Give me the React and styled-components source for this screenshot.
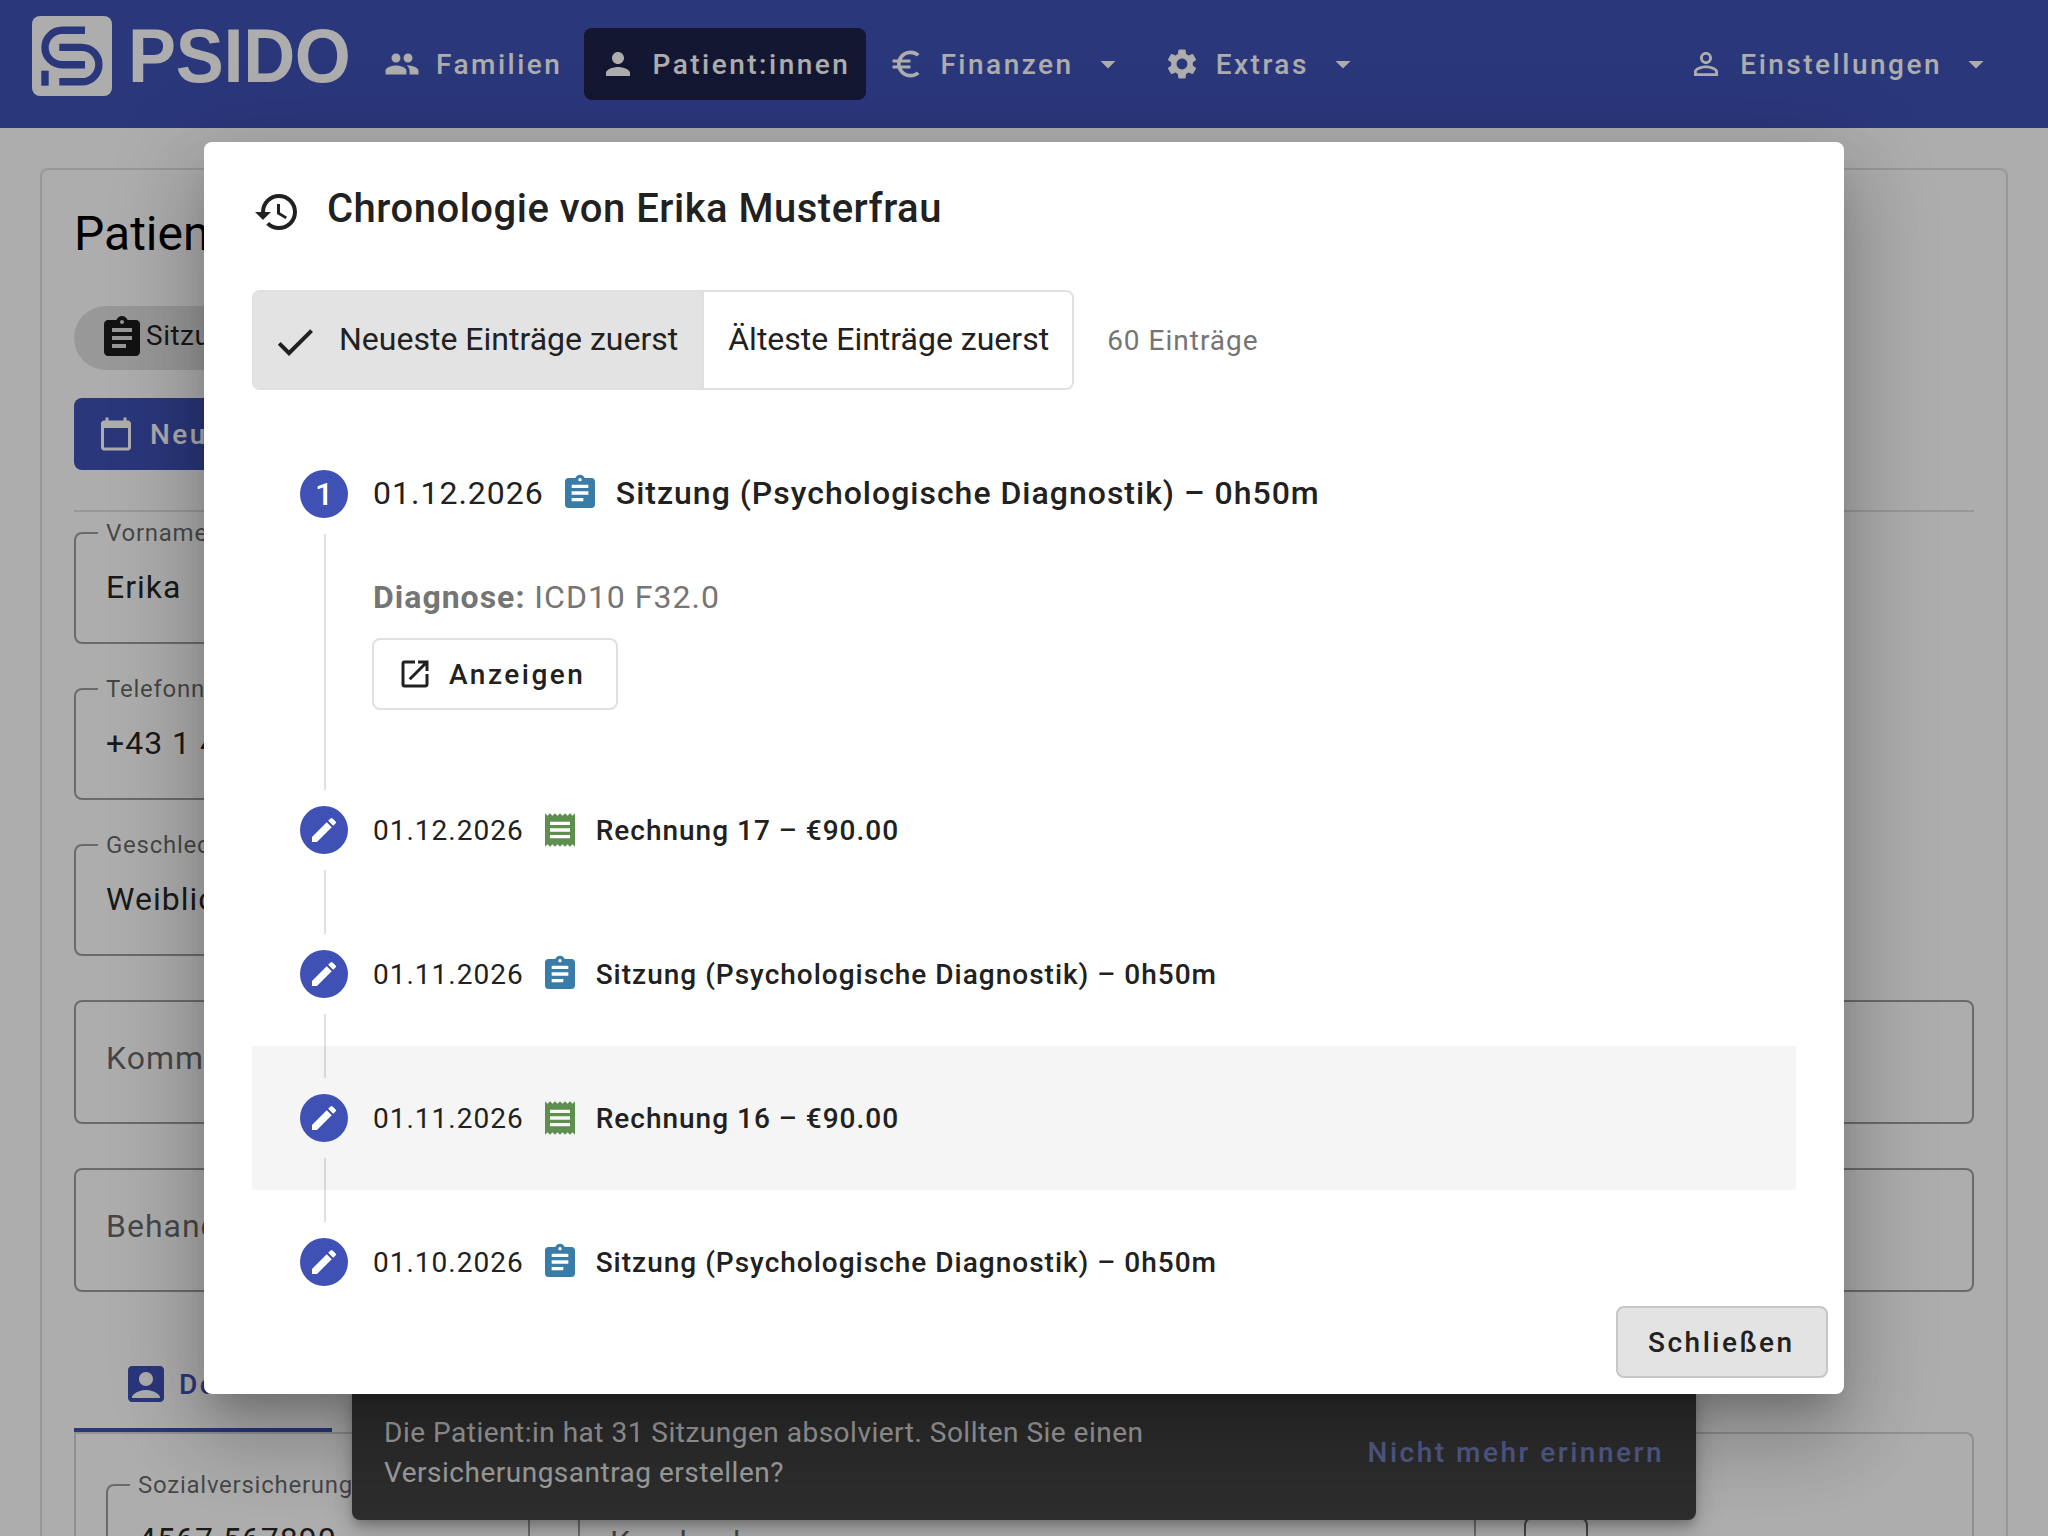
import React from 'react';
import styled, { createGlobalStyle } from 'styled-components';
import {
  MdPeople,
  MdPerson,
  MdEuroSymbol,
  MdSettings,
  MdPersonOutline,
  MdArrowDropDown,
  MdHistory,
  MdCheck,
  MdAssignment,
  MdReceipt,
  MdCreate,
  MdOpenInNew,
  MdCalendarToday,
  MdAccountBox,
} from 'react-icons/md';

const GlobalStyle = createGlobalStyle`
  * {
    box-sizing: border-box;
  }
  body {
    margin: 0;
    overflow: hidden;
    background: #fff;
    font-family: Roboto, sans-serif;
    color: rgba(0, 0, 0, 0.87);
  }
  svg {
    display: block;
    flex: none;
  }
`;

const Screen = styled.div`
  position: relative;
  width: 2048px;
  height: 1536px;
  overflow: hidden;
`;

/* header */

const Header = styled.header`
  display: flex;
  height: 128px;
  padding: 0 38px 0 32px;
  background: #3f51b5;
  color: #fff;
`;

const Brand = styled.div`
  display: flex;
  align-items: center;
  width: 336px;
  height: 112px;
`;

const BrandName = styled.span`
  margin-left: 16px;
  font: bold 72px/80px 'Liberation Sans', Arial, sans-serif;
  letter-spacing: -0.3px;
  transform: scaleY(1.045);
`;

const Nav = styled.nav`
  display: flex;
  flex: 1;
  align-items: center;
  gap: 6px;
`;

// labels sit one pixel below the icon's centre line
const BaseButton = styled.button`
  display: flex;
  align-items: center;
  gap: 16px;
  height: 72px;
  padding: 2px 16px 0;
  border: 0;
  border-radius: 8px;
  font: 500 28px/40px Roboto, sans-serif;
  letter-spacing: 2.5px;
  white-space: nowrap;

  svg {
    margin-top: -2px;
  }
`;

const NavButton = styled(BaseButton)`
  background: ${props => (props.$active ? '#1c224a' : 'transparent')};
  color: #fff;
  margin-left: ${props => props.$push || '0'};
`;

/* patient page */

const Page = styled.main`
  padding: 40px;
`;

const Card = styled.section`
  height: 1500px;
  padding: 32px;
  border: 2px solid #e0e0e0;
  border-radius: 8px;
`;

const PageTitle = styled.h1`
  margin: 0 0 40px;
  color: #000;
  font-size: 48px;
  font-weight: 400;
  line-height: 64px;
`;

const Chip = styled.div`
  display: flex;
  align-items: center;
  width: 240px;
  height: 64px;
  margin-bottom: 28px;
  padding: 0 24px 4px;
  border-radius: 32px;
  background: #e0e0e0;
  font-size: 28px;
  line-height: 40px;
  letter-spacing: 0.5px;

  svg {
    margin-top: 4px;
  }
`;

const PrimaryButton = styled(BaseButton)`
  width: 300px;
  padding: 2px 24px 0;
  background: #3f51b5;
  color: #fff;
`;

const Divider = styled.hr`
  height: 2px;
  margin: 40px 0 20px;
  border: 0;
  background: #e0e0e0;
`;

const Field = styled.div`
  position: relative;
  width: ${props => props.$width || '100%'};
  height: ${props => (props.$tall ? 124 : 112)}px;
  margin-bottom: 44px;
  padding: ${props => (props.$tall ? 32 : 29)}px 30px 0;
  border: 2px solid rgba(0, 0, 0, 0.38);
  border-radius: 8px;
  color: ${props => (props.$tall ? 'rgba(0, 0, 0, 0.6)' : 'inherit')};
  font-size: 32px;
  line-height: 48px;
  letter-spacing: 1px;
  white-space: nowrap;
`;

const FieldLabel = styled.label`
  position: absolute;
  top: -15px;
  left: 22px;
  padding: 0 8px;
  background: #fff;
  color: rgba(0, 0, 0, 0.6);
  font-size: 24px;
  line-height: 28px;
  letter-spacing: 0.75px;
`;

const Tabs = styled.div`
  display: flex;
`;

const Tab = styled(BaseButton)`
  gap: 9px;
  width: 258px;
  height: 96px;
  padding: 6px 46px 0 48px;
  border-bottom: 4px solid #3f51b5;
  border-radius: 0;
  background: none;
  color: #3f51b5;
`;

const TabPanel = styled.div`
  display: flex;
  gap: 48px;
  height: 400px;
  padding: 50px 30px;
  border: 2px solid #d6d6d6;
  border-radius: 0 8px 8px 8px;
`;

const SquareButton = styled.div`
  width: 64px;
  height: 64px;
  margin-top: 33px;
  border: 2px solid rgba(0, 0, 0, 0.6);
  border-radius: 8px;
`;

/* snackbar floats over the page, the backdrop covers both */

const Snackbar = styled.div`
  position: absolute;
  left: 352px;
  bottom: 16px;
  display: flex;
  align-items: center;
  justify-content: space-between;
  width: 1344px;
  height: 136px;
  padding: 2px 32px 0;
  border-radius: 8px;
  background: #434343;
  box-shadow: 0 6px 10px -2px rgba(0, 0, 0, 0.2),
    0 12px 20px rgba(0, 0, 0, 0.14), 0 2px 36px rgba(0, 0, 0, 0.12);
  color: rgba(255, 255, 255, 0.9);
  font-size: 28px;
  line-height: 40px;
  letter-spacing: 0.5px;
`;

const SnackText = styled.div`
  width: 800px;
`;

const SnackAction = styled.span`
  color: #7986cb;
  font-weight: 500;
  letter-spacing: 2.5px;
`;

const Backdrop = styled.div`
  position: absolute;
  inset: 0;
  display: flex;
  align-items: center;
  justify-content: center;
  background: rgba(0, 0, 0, 0.32);
`;

/* dialog */

const Dialog = styled.div`
  display: flex;
  flex-direction: column;
  width: 1640px;
  height: 1252px;
  border-radius: 8px;
  background: #fff;
  color: #212121;
  box-shadow: 0 22px 30px -14px rgba(0, 0, 0, 0.2),
    0 48px 76px 6px rgba(0, 0, 0, 0.14), 0 18px 92px 16px rgba(0, 0, 0, 0.12);
`;

const DialogTitle = styled.h2`
  display: flex;
  gap: 26px;
  height: 64px;
  margin: 35px 49px -1px;
  font-size: 40px;
  font-weight: 500;
  line-height: 64px;
  letter-spacing: 0.5px;

  svg {
    margin-top: 11px;
  }
`;

const DialogBody = styled.div`
  flex: 1;
  min-height: 0;
  overflow: hidden;
  padding: 50px 48px 0;
`;

const SortRow = styled.div`
  display: flex;
  align-items: center;
  margin-bottom: 32px;
`;

const ToggleGroup = styled.div`
  display: flex;
  height: 100px;
  border: 2px solid #e0e0e0;
  border-radius: 8px;
  overflow: hidden;
`;

const Toggle = styled.button`
  display: flex;
  align-items: center;
  gap: 20px;
  padding: ${props => (props.$checked ? '0 24px 3px 17px' : '0 23px 3px 24px')};
  border: 0;
  border-left: ${props => (props.$checked ? 0 : '2px solid #e0e0e0')};
  background: ${props => (props.$checked ? '#e3e3e3' : '#fff')};
  color: #212121;
  font: 400 32px/48px Roboto, sans-serif;

  svg {
    margin-top: 6px;
  }
`;

const Count = styled.span`
  margin: 2px 0 0 33px;
  color: #757575;
  font-size: 28px;
  line-height: 40px;
  letter-spacing: 1px;
`;

const StepHeader = styled.div`
  display: flex;
  align-items: center;
  height: 144px;
  padding-left: 48px;
  background: ${props => (props.$hovered ? '#f5f5f5' : 'transparent')};
  font-size: ${props => (props.$selected ? 32 : 28)}px;
  line-height: 48px;
  letter-spacing: 1px;
`;

const Rail = styled.div`
  display: flex;
  flex-direction: column;
  align-self: stretch;
  width: 48px;
  margin-right: 24px;
  gap: 16px;
`;

const RailLine = styled.div`
  flex: 1;
  width: 2px;
  margin-left: 24px;
  background: ${props => (props.$hidden ? 'transparent' : 'rgba(0, 0, 0, 0.12)')};
`;

const StepDot = styled.div`
  display: flex;
  align-items: center;
  justify-content: center;
  height: 48px;
  border-radius: 50%;
  background: #3f51b5;
  color: #fff;
  font-size: 32px;
  font-weight: 500;
  letter-spacing: 0;
`;

const StepLabel = styled.div`
  display: flex;
  align-items: center;
  gap: 16px;
  white-space: nowrap;
  margin: ${props => (props.$selected ? '-2px' : '2px')} 0 0 1px;

  svg {
    margin-top: ${props => (props.$selected ? 0 : '-2px')};
  }

  b {
    font-weight: 500;
  }
`;

const StepContent = styled.div`
  display: flex;
  height: 192px;
  padding-left: 48px;
`;

const StepDetails = styled.div`
  padding-top: 7px;
`;

const Diagnosis = styled.p`
  margin: 0 0 17px 1px;
  color: #757575;
  font-size: 32px;
  line-height: 48px;
  letter-spacing: 1px;

  strong {
    font-weight: 700;
  }
`;

const OutlinedButton = styled(BaseButton)`
  padding: ${props => (props.$focused ? '2px 30px 0' : '2px 31px 0 23px')};
  border: 2px solid ${props => (props.$focused ? '#c6c6c6' : '#e0e0e0')};
  background: ${props => (props.$focused ? '#e3e3e3' : '#fff')};
  color: #212121;
`;

const DialogActions = styled.div`
  display: flex;
  justify-content: flex-end;
  padding: 16px;

  button {
    width: 212px;
  }
`;

const Logo = () => (
  <svg width="80" height="80" viewBox="0 0 80 80" fill="none">
    <rect width="80" height="80" rx="8" fill="#fff" />
    <g stroke="#3f51b5" strokeWidth="7.4">
      <path d="M53 14.3H30.2a17.2 17.2 0 0 0 0 34.4H53" />
      <path d="M27.3 31.4h22.4a17.2 17.2 0 0 1 0 34.4H27.3" />
      <path d="M13 54.7v15" />
    </g>
  </svg>
);

const entries = [
  { date: '01.12.2026', type: 'session', title: 'Sitzung (Psychologische Diagnostik) – 0h50m', diagnosis: 'ICD10 F32.0' },
  { date: '01.12.2026', type: 'invoice', title: 'Rechnung 17 – €90.00' },
  { date: '01.11.2026', type: 'session', title: 'Sitzung (Psychologische Diagnostik) – 0h50m' },
  { date: '01.11.2026', type: 'invoice', title: 'Rechnung 16 – €90.00', hovered: true },
  { date: '01.10.2026', type: 'session', title: 'Sitzung (Psychologische Diagnostik) – 0h50m' },
];

const Entry = ({ entry, index }) => {
  const selected = index === 0;
  return (
    <>
      <StepHeader $selected={selected} $hovered={entry.hovered}>
        <Rail>
          <RailLine $hidden={selected} />
          <StepDot>{selected ? index + 1 : <MdCreate size={32} />}</StepDot>
          <RailLine />
        </Rail>
        <StepLabel $selected={selected}>
          <span>{entry.date}</span>
          {entry.type === 'session'
            ? <MdAssignment size={40} color="#3a7ca8" />
            : <MdReceipt size={40} color="#5f8f4e" />}
          <b>{entry.title}</b>
        </StepLabel>
      </StepHeader>
      {entry.diagnosis && (
        <StepContent>
          <Rail>
            <RailLine />
          </Rail>
          <StepDetails>
            <Diagnosis><strong>Diagnose:</strong> {entry.diagnosis}</Diagnosis>
            <OutlinedButton>
              <MdOpenInNew size={36} />
              Anzeigen
            </OutlinedButton>
          </StepDetails>
        </StepContent>
      )}
    </>
  );
};

const PatientPage = () => (
  <Page>
    <Card>
      <PageTitle>Patient:in</PageTitle>
      <Chip><MdAssignment size={48} />Sitzungen</Chip>
      <PrimaryButton><MdCalendarToday size={36} />Neuer</PrimaryButton>
      <Divider />
      <Field $width="540px"><FieldLabel>Vorname</FieldLabel>Erika</Field>
      <Field $width="540px"><FieldLabel>Telefonnummer</FieldLabel>+43 1 4</Field>
      <Field $width="540px"><FieldLabel>Geschlecht</FieldLabel>Weiblich</Field>
      <Field $tall>Kommentar</Field>
      <Field $tall>Behandlung</Field>
      <Tabs>
        <Tab><MdAccountBox size={48} />Details</Tab>
      </Tabs>
      <TabPanel>
        <Field $width="424px"><FieldLabel>Sozialversicherung</FieldLabel>4567 567890</Field>
        <Field $width="898px" $tall>Krankenkasse</Field>
        <SquareButton />
      </TabPanel>
    </Card>
  </Page>
);

function App() {
  return (
    <Screen>
      <GlobalStyle />
      <Header>
        <Brand>
          <Logo />
          <BrandName>PSIDO</BrandName>
        </Brand>
        <Nav>
          <NavButton><MdPeople size={36} />Familien</NavButton>
          <NavButton $active><MdPerson size={36} />Patient:innen</NavButton>
          <NavButton><MdEuroSymbol size={36} />Finanzen<MdArrowDropDown size={36} /></NavButton>
          <NavButton><MdSettings size={36} />Extras<MdArrowDropDown size={36} /></NavButton>
          <NavButton $push="auto"><MdPersonOutline size={36} />Einstellungen<MdArrowDropDown size={36} /></NavButton>
        </Nav>
      </Header>
      <PatientPage />
      <Snackbar>
        <SnackText>
          Die Patient:in hat 31 Sitzungen absolviert. Sollten Sie einen Versicherungsantrag erstellen?
        </SnackText>
        <SnackAction>Nicht mehr erinnern</SnackAction>
      </Snackbar>
      <Backdrop>
        <Dialog>
          <DialogTitle><MdHistory size={48} />Chronologie von Erika Musterfrau</DialogTitle>
          <DialogBody>
            <SortRow>
              <ToggleGroup>
                <Toggle $checked><MdCheck size={48} />Neueste Einträge zuerst</Toggle>
                <Toggle>Älteste Einträge zuerst</Toggle>
              </ToggleGroup>
              <Count>60 Einträge</Count>
            </SortRow>
            {entries.map((entry, i) => <Entry key={i} entry={entry} index={i} />)}
          </DialogBody>
          <DialogActions>
            <OutlinedButton $focused>Schließen</OutlinedButton>
          </DialogActions>
        </Dialog>
      </Backdrop>
    </Screen>
  );
}

export default App;
